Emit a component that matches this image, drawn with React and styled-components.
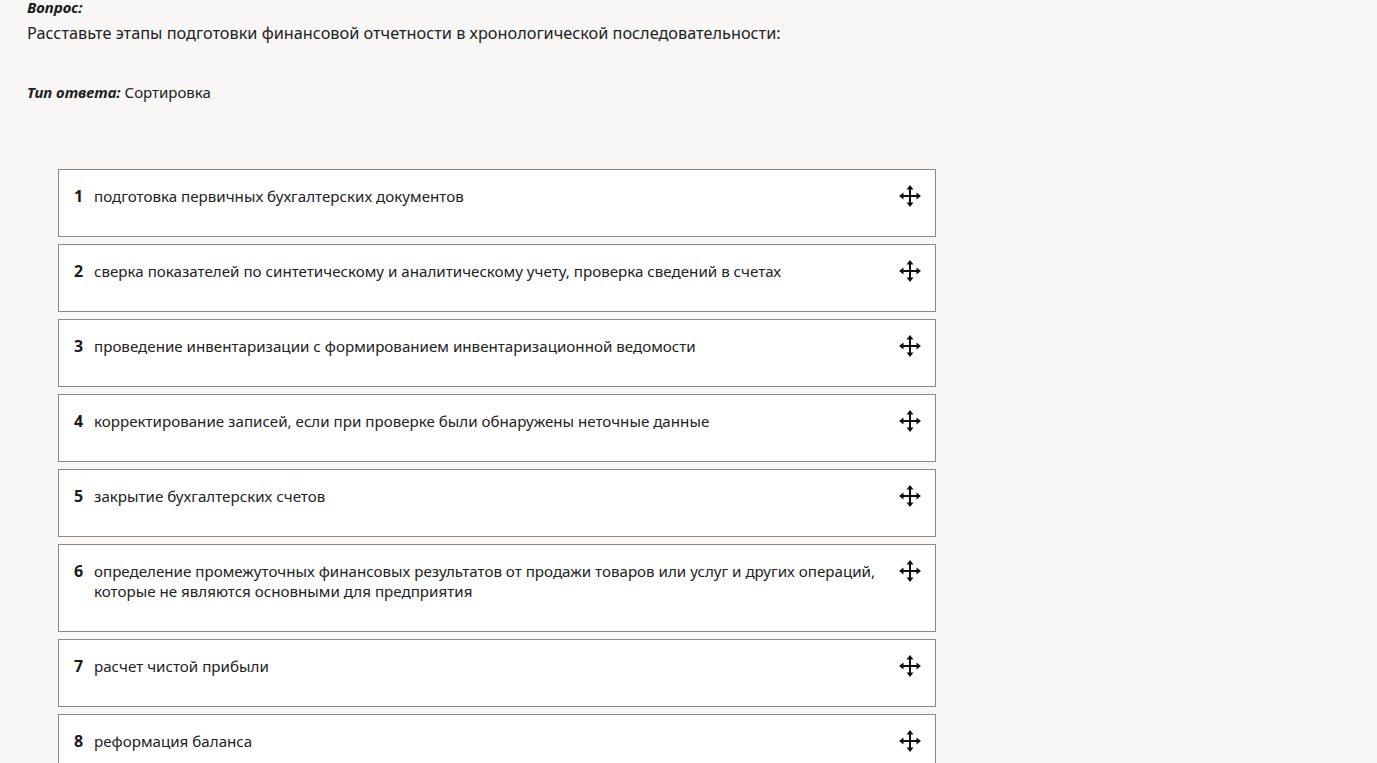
import React from "react";
import styled, { createGlobalStyle } from "styled-components";

const Global = createGlobalStyle`
  html, body {
    margin: 0;
    padding: 0;
    background: #f8f7f5;
  }
  body {
    font-family: "Noto Sans", "Open Sans", "Liberation Sans", sans-serif;
    color: #222;
    overflow: hidden;
  }
`;

const Page = styled.div`
  padding: 0 27px;
  margin-top: -3px;
`;

const Label = styled.div`
  font-size: 15px;
  line-height: 20px;
  font-weight: 700;
  font-style: italic;
  color: #1a1a1a;
`;

const Question = styled.div`
  font-size: 16.3px;
  line-height: 20px;
  margin-top: 6px;
`;

const AnswerType = styled.div`
  font-size: 15px;
  line-height: 20px;
  margin-top: 39px;
`;

const TypeLabel = styled.span`
  font-weight: 700;
  font-style: italic;
`;

const List = styled.ol`
  list-style: none;
  margin: 67px 0 0 31px;
  padding: 0;
  width: 878px;
  display: flex;
  flex-direction: column;
  gap: 7px;
`;

const Item = styled.li`
  box-sizing: border-box;
  display: flex;
  align-items: flex-start;
  background: #fff;
  border: 1px solid #8a8a8a;
  padding: 16px 14px 30px 15px;
`;

const Num = styled.span`
  flex: 0 0 20px;
  font-size: 16px;
  line-height: 20px;
  font-weight: 700;
  color: #1a1a1a;
`;

const Text = styled.span`
  flex: 1;
  font-size: 15.15px;
  line-height: 20px;
  color: #222;
  padding-right: 18px;
`;

const Handle = styled.svg`
  flex: 0 0 22px;
  width: 22px;
  height: 22px;
  margin: -1px 0 -1px;
  cursor: move;
`;

function MoveIcon() {
  return (
    <Handle viewBox="0 0 22 22" aria-hidden="true">
      <g stroke="#111" strokeWidth="2" fill="none">
        <line x1="11" y1="4" x2="11" y2="18" />
        <line x1="4" y1="11" x2="18" y2="11" />
      </g>
      <g fill="#111">
        <polygon points="11,0 7.5,4.5 14.5,4.5" />
        <polygon points="11,22 7.5,17.5 14.5,17.5" />
        <polygon points="0,11 4.5,7.5 4.5,14.5" />
        <polygon points="22,11 17.5,7.5 17.5,14.5" />
      </g>
    </Handle>
  );
}

const steps = [
  "подготовка первичных бухгалтерских документов",
  "сверка показателей по синтетическому и аналитическому учету, проверка сведений в счетах",
  "проведение инвентаризации с формированием инвентаризационной ведомости",
  "корректирование записей, если при проверке были обнаружены неточные данные",
  "закрытие бухгалтерских счетов",
  "определение промежуточных финансовых результатов от продажи товаров или услуг и других операций, которые не являются основными для предприятия",
  "расчет чистой прибыли",
  "реформация баланса",
];

export default function App() {
  return (
    <>
      <Global />
      <Page>
        <Label>Вопрос:</Label>
        <Question>
          Расставьте этапы подготовки финансовой отчетности в хронологической последовательности:
        </Question>
        <AnswerType>
          <TypeLabel>Тип ответа:</TypeLabel> Сортировка
        </AnswerType>
        <List>
          {steps.map((s, i) => (
            <Item key={i}>
              <Num>{i + 1}</Num>
              <Text>{s}</Text>
              <MoveIcon />
            </Item>
          ))}
        </List>
      </Page>
    </>
  );
}
